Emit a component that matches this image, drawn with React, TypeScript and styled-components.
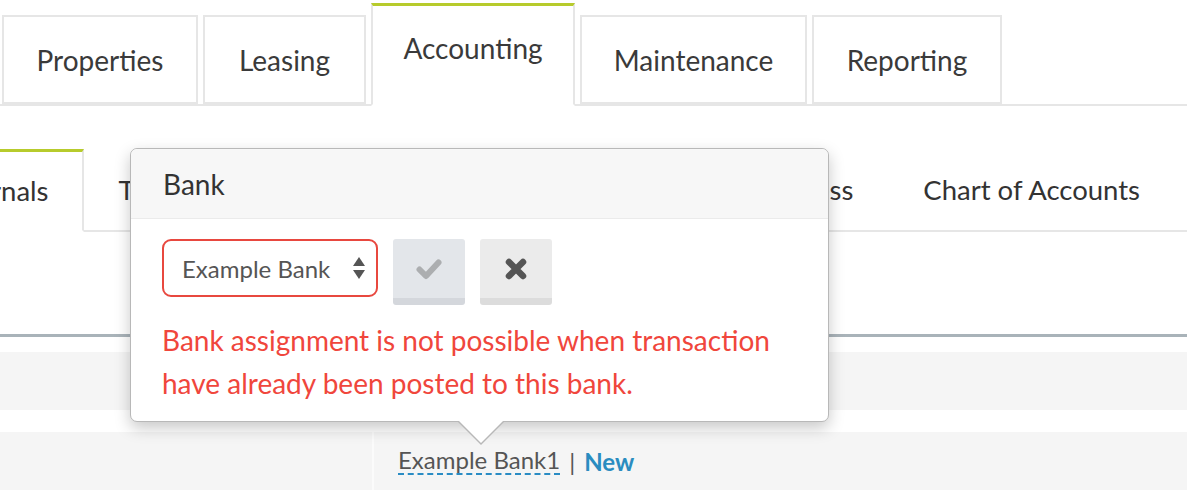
import React from 'react'
import styled, { createGlobalStyle } from 'styled-components'

const GlobalStyle = createGlobalStyle`
  html, body {
    margin: 0;
    padding: 0;
    background: #ffffff;
  }
  body {
    font-family: Lato, 'Liberation Sans', sans-serif;
    color: #333333;
  }
`

const Page = styled.div`
  position: relative;
  width: 1187px;
  height: 501px;
  overflow: hidden;
  background: #ffffff;
`

const MainTabs = styled.nav`
  display: flex;
  align-items: flex-end;
  gap: 5px;
  margin-top: 3px;
  padding-left: 2px;
  height: 101px;
  border-bottom: 2px solid #e6e6e6;
`

const MainTab = styled.div<{ $active?: boolean; $width: number }>`
  box-sizing: border-box;
  width: ${(p) => p.$width}px;
  height: ${(p) => (p.$active ? 103 : 89)}px;
  margin-bottom: ${(p) => (p.$active ? -2 : 0)}px;
  display: flex;
  align-items: center;
  justify-content: center;
  padding-bottom: ${(p) => (p.$active ? 14 : 0)}px;
  border: 2px solid #e6e6e6;
  border-top: ${(p) => (p.$active ? '3px solid #b7cb2c' : '2px solid #e6e6e6')};
  border-bottom: ${(p) => (p.$active ? '2px solid #ffffff' : '2px solid #e6e6e6')};
  background: #ffffff;
  font-size: 28px;
  color: #3a3a3a;
  white-space: nowrap;
`

const SubTabs = styled.nav`
  display: flex;
  align-items: flex-end;
  justify-content: space-between;
  margin-top: 43px;
  padding-right: 11px;
  height: 81px;
  border-bottom: 2px solid #e6e6e6;
`

const SubTabGroup = styled.div`
  display: flex;
  align-items: flex-end;
`

const SubTab = styled.div<{ $active?: boolean; $offset?: number }>`
  box-sizing: border-box;
  height: ${(p) => (p.$active ? 83 : 81)}px;
  margin-bottom: ${(p) => (p.$active ? -2 : 0)}px;
  margin-left: ${(p) => p.$offset ?? 0}px;
  padding: 0 34px 2px;
  display: flex;
  align-items: center;
  white-space: nowrap;
  border-top: 3px solid ${(p) => (p.$active ? '#b7cb2c' : 'transparent')};
  border-right: 2px solid ${(p) => (p.$active ? '#e6e6e6' : 'transparent')};
  border-bottom: 2px solid ${(p) => (p.$active ? '#ffffff' : 'transparent')};
  background: #ffffff;
  font-size: 27.5px;
  color: #333333;
`

const Divider = styled.div`
  margin-top: 102px;
  height: 3px;
  background: #a9b3b9;
`

const GridRow = styled.div<{ $gapTop: number }>`
  display: flex;
  gap: 2px;
  margin-top: ${(p) => p.$gapTop}px;
  height: 58px;
  background: #fbfbfb;
`

const Cell = styled.div<{ $width?: number; $padded?: boolean }>`
  flex: ${(p) => (p.$width ? `0 0 ${p.$width}px` : '1')};
  display: flex;
  align-items: center;
  padding-left: ${(p) => (p.$padded ? 24 : 0)}px;
  background: #f5f5f5;
  font-size: 24px;
  color: #555555;
`

const BankName = styled.span`
  border-bottom: 2px dashed #2a8cc4;
  line-height: 1.1;
`

const Pipe = styled.span`
  margin: 0 9px;
  color: #555555;
`

const NewLink = styled.span`
  color: #2a8cc0;
  font-weight: 700;
`

const Popover = styled.div`
  position: absolute;
  left: 130px;
  top: 148px;
  width: 699px;
  height: 274px;
  box-sizing: border-box;
  border: 1px solid #b8b8b8;
  border-radius: 7px;
  background: #ffffff;
  box-shadow: 0 6px 16px rgba(0, 0, 0, 0.22);

  &::before,
  &::after {
    content: '';
    position: absolute;
    width: 0;
    height: 0;
    border-style: solid;
  }
  &::before {
    left: 327px;
    bottom: -24px;
    border-width: 23px 23px 0 23px;
    border-color: #b8b8b8 transparent transparent transparent;
  }
  &::after {
    left: 328px;
    bottom: -22px;
    border-width: 22px 22px 0 22px;
    border-color: #ffffff transparent transparent transparent;
  }
`

const PopoverHeader = styled.div`
  height: 69px;
  display: flex;
  align-items: center;
  padding-left: 32px;
  background: #f7f7f7;
  border-bottom: 1px solid #ebebeb;
  border-radius: 7px 7px 0 0;
  font-size: 28px;
  color: #333333;
`

const PopoverBody = styled.div`
  padding: 20px 31px 0;
`

const Controls = styled.div`
  display: flex;
  align-items: flex-start;
  gap: 15px;
`

const SelectBox = styled.div`
  box-sizing: border-box;
  width: 216px;
  height: 58px;
  display: flex;
  align-items: center;
  justify-content: space-between;
  padding: 0 10px 0 18px;
  border: 2px solid #e8483f;
  border-radius: 9px;
  font-size: 24px;
  color: #555555;
  white-space: nowrap;
`

const IconButton = styled.button<{ $tone: 'blue' | 'gray' }>`
  box-sizing: border-box;
  width: 72px;
  height: 66px;
  display: flex;
  align-items: center;
  justify-content: center;
  padding: 0;
  border: none;
  border-radius: 3px;
  background: ${(p) => (p.$tone === 'blue' ? '#e3e6ea' : '#ebebeb')};
  border-bottom: 7px solid ${(p) => (p.$tone === 'blue' ? '#d4d7dc' : '#dcdcdc')};
  color: ${(p) => (p.$tone === 'blue' ? '#acaeb0' : '#555555')};
`

const ErrorText = styled.p`
  margin: 14px 0 0;
  font-size: 28px;
  line-height: 43px;
  color: #f0463c;
  white-space: nowrap;
`

function SortArrows(): JSX.Element {
  return (
    <svg width="14" height="24" viewBox="0 0 14 24">
      <path d="M7 1 L13 10 L1 10 Z" fill="#555555" />
      <path d="M7 23 L13 14 L1 14 Z" fill="#555555" />
    </svg>
  )
}

function CheckIcon(): JSX.Element {
  return (
    <svg width="26" height="22" viewBox="0 0 26 22">
      <polyline
        points="3.5,11.5 10,18 22.5,4.5"
        fill="none"
        stroke="currentColor"
        strokeWidth="6"
        strokeLinecap="round"
        strokeLinejoin="round"
      />
    </svg>
  )
}

function CrossIcon(): JSX.Element {
  return (
    <svg width="22" height="22" viewBox="0 0 22 22">
      <path
        d="M4 4 L18 18 M18 4 L4 18"
        fill="none"
        stroke="currentColor"
        strokeWidth="6.5"
        strokeLinecap="round"
      />
    </svg>
  )
}

const mainTabs = [
  { label: 'Properties', width: 196 },
  { label: 'Leasing', width: 163 },
  { label: 'Accounting', width: 204, active: true },
  { label: 'Maintenance', width: 227 },
  { label: 'Reporting', width: 190 },
]

export default function App(): JSX.Element {
  return (
    <Page>
      <GlobalStyle />
      <MainTabs>
        {mainTabs.map((t) => (
          <MainTab key={t.label} $active={t.active} $width={t.width}>
            {t.label}
          </MainTab>
        ))}
      </MainTabs>
      <SubTabs>
        <SubTabGroup>
          <SubTab $active $offset={-85}>Journals</SubTab>
          <SubTab>Transactions</SubTab>
          <SubTab>Deposits</SubTab>
        </SubTabGroup>
        <SubTabGroup>
          <SubTab>Closing Process</SubTab>
          <SubTab>Chart of Accounts</SubTab>
        </SubTabGroup>
      </SubTabs>
      <Divider />
      <GridRow $gapTop={15}>
        <Cell />
      </GridRow>
      <GridRow $gapTop={22}>
        <Cell $width={372} />
        <Cell $padded>
          <BankName>Example Bank1</BankName>
          <Pipe>|</Pipe>
          <NewLink>New</NewLink>
        </Cell>
      </GridRow>
      <Popover>
        <PopoverHeader>Bank</PopoverHeader>
        <PopoverBody>
          <Controls>
            <SelectBox>
              <span>Example Bank</span>
              <SortArrows />
            </SelectBox>
            <IconButton $tone="blue">
              <CheckIcon />
            </IconButton>
            <IconButton $tone="gray">
              <CrossIcon />
            </IconButton>
          </Controls>
          <ErrorText>
            Bank assignment is not possible when transaction
            <br />
            have already been posted to this bank.
          </ErrorText>
        </PopoverBody>
      </Popover>
    </Page>
  )
}
